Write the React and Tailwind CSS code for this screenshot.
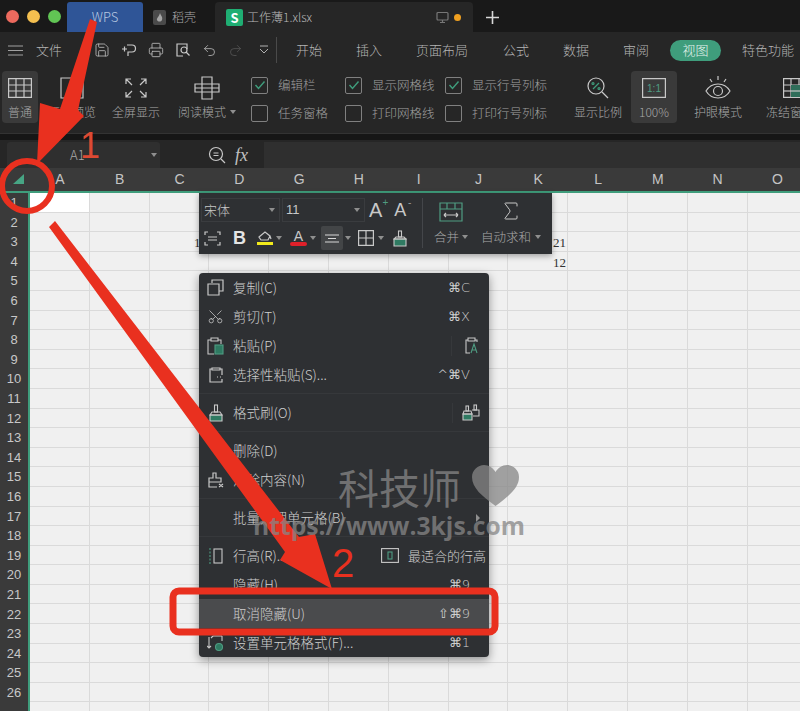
import { Scissors, Printer, Undo2, Redo2, Save, Sigma } from "lucide-react";

const cols = ["A", "B", "C", "D", "G", "H", "I", "J", "K", "L", "M", "N", "O"];
const rows = Array.from({ length: 26 }, (_, i) => i + 1);
const cells = Array.from({ length: 27 * 13 }, (_, i) => i);

const GREEN = "#3f9d7c";

function Caret({ className = "" }) {
  return <span className={"inline-block w-0 h-0 border-x-[3px] border-x-transparent border-t-[4px] border-t-[#8f8f8f] " + className}></span>;
}

function Icon({ w = 18, h = 18, vb = "0 0 18 18", children, className = "" }) {
  return (
    <svg width={w} height={h} viewBox={vb} fill="none" stroke="#c8c8c8" strokeWidth="1.2" className={"shrink-0 " + className}>
      {children}
    </svg>
  );
}

function TopTabs() {
  return (
    <div className="flex h-8 bg-[#191919] items-end">
      <div className="flex items-center gap-[8px] w-[67px] h-8 pl-[6px]">
        <span className="w-[13px] h-[13px] rounded-full bg-[#ed6a5e]"></span>
        <span className="w-[13px] h-[13px] rounded-full bg-[#f4bf4f]"></span>
        <span className="w-[13px] h-[13px] rounded-full bg-[#61c554]"></span>
      </div>
      <div className="w-[76px] h-[30px] bg-[#2f5597] rounded-t-[3px] flex items-center justify-center text-[13px] text-[#b9c9e2]">WPS</div>
      <div className="w-[72px] h-[30px] flex items-center pl-[10px] gap-[6px] text-[12px] text-[#a8a8a8]">
        <svg width="13" height="15" viewBox="0 0 13 15">
          <rect width="13" height="15" rx="2" fill="#4a4a4a" />
          <path d="M7 3c1 3 3 4 2 7-1 2-4 2-5 0-.6-2 2-3 3-7z" fill="#a5a5a5" />
        </svg>
        <span>稻壳</span>
      </div>
      <div className="w-[258px] h-[30px] bg-[#262626] rounded-t-[4px] flex items-center pl-[11px] text-[12px] text-[#b8b8b8]">
        <span className="w-[17px] h-[17px] rounded-[2px] bg-[#1fae73] text-white text-[13px] font-bold flex items-center justify-center leading-none">S</span>
        <span className="ml-[4px] w-[189px]">工作薄1.xlsx</span>
        <Icon w={13} h={13} vb="0 0 13 13" className="opacity-50">
          <rect x="1" y="1.500" width="11" height="7.500" rx="1" />
          <path d="M6.500 9v2.500M4 11.500h5" />
        </Icon>
        <span className="ml-[5px] w-[7px] h-[7px] rounded-full bg-[#f0a020]"></span>
      </div>
      <div className="w-[38px] h-[30px] flex items-center justify-center text-[#d8d8d8]">
        <svg width="13" height="13" viewBox="0 0 13 13" stroke="currentColor" strokeWidth="1.600">
          <path d="M6.500 0v13M0 6.500h13" />
        </svg>
      </div>
    </div>
  );
}

function MenuRow() {
  const tabs = [
    ["开始", "w-[60px]"],
    ["插入", "w-[60px]"],
    ["页面布局", "w-[87px]"],
    ["公式", "w-[60px]"],
    ["数据", "w-[60px]"],
    ["审阅", "w-[47px]"],
  ];
  return (
    <div className="flex h-9 bg-[#262626] items-center text-[13px] text-[#b4b4b4]">
      <svg width="15" height="11" viewBox="0 0 15 11" stroke="#a0a0a0" strokeWidth="1" className="ml-2">
        <path d="M0 1h15M0 5.500h15M0 10h15" />
      </svg>
      <span className="ml-[13px] w-[27px]">文件</span>
      <div className="ml-[31px] flex items-center gap-[11px] text-[#b8b8b8]">
        <Save size={16} strokeWidth={1.3} />
        <Icon w={16} h={16} vb="0 0 16 16">
          <path d="M6 3h5a3 3 0 0 1 0 7H7v4M1 7h5M3.500 4.500v5" />
        </Icon>
        <Printer size={16} strokeWidth={1.3} />
        <Icon w={16} h={16} vb="0 0 16 16">
          <path d="M12 7V2H2v12h6" />
          <circle cx="9" cy="8" r="3" />
          <path d="M11 10l3.500 3.500" />
        </Icon>
        <Undo2 size={15} strokeWidth={1.3} />
        <Redo2 size={15} strokeWidth={1.3} className="text-[#555]" />
      </div>
      <svg width="10" height="10" viewBox="0 0 10 10" stroke="#b0b0b0" fill="none" className="ml-[16px]">
        <path d="M1 1h8M1 4l4 4 4-4" />
      </svg>
      <span className="ml-[7px] h-[26px] w-px bg-[#4a4a4a]"></span>
      <div className="ml-[19px] flex">
        {tabs.map(([label, width]) => (
          <span key={label} className={width}>{label}</span>
        ))}
      </div>
      <span className="w-[51px] h-[21px] rounded-full bg-[#3f9d7c] text-[#e6f3ee] flex items-center justify-center">视图</span>
      <span className="ml-[21px] whitespace-nowrap">特色功能</span>
    </div>
  );
}

function RibbonButton({ label, children, active, width, caret }) {
  return (
    <div className={"shrink-0 flex flex-col items-center rounded-[4px] pt-[3px] h-[52px] " + width + (active ? " bg-[#3a3a3a]" : "")}>
      <div className="h-[28px] flex items-center justify-center">{children}</div>
      <div className="mt-[2px] text-[12px] leading-[16px] text-[#a8a8a8] whitespace-nowrap flex items-center gap-[4px]">
        {label}
        {caret && <Caret />}
      </div>
    </div>
  );
}

function Check({ on, label }) {
  return (
    <div className="flex items-center h-[28px] text-[12.500px] text-[#a0a0a0] whitespace-nowrap">
      <span className="w-[17px] h-[17px] border border-[#808080] rounded-[2px] flex items-center justify-center mr-[10px]">
        {on && (
          <svg width="12" height="12" viewBox="0 0 12 12" fill="none" stroke={GREEN} strokeWidth="1.400">
            <path d="M1.500 6l3 3.500 6-7" />
          </svg>
        )}
      </span>
      {label}
    </div>
  );
}

function Ribbon() {
  return (
    <div className="flex h-[66px] bg-[#262626] pl-[2px] pt-[3px] border-b border-[#333] overflow-hidden">
      <RibbonButton label="普通" active width="w-[36px]">
        <Icon w={24} h={20} vb="0 0 24 20">
          <path d="M.6.6h22.800v18.800H.6zM.6 7h22.800M.6 13h22.800M8 .6v18.800M16 .6v18.800" />
        </Icon>
      </RibbonButton>
      <RibbonButton label="页面预览" width="w-[62px] ml-[3px]">
        <Icon w={24} h={22} vb="0 0 24 22">
          <path d="M1 1h22v20H1z" />
        </Icon>
      </RibbonButton>
      <RibbonButton label="全屏显示" width="w-[50px] ml-[8px]">
        <Icon w={22} h={20} vb="0 0 22 20">
          <path d="M1 6V1h5M1 1l6 6M21 6V1h-5M21 1l-6 6M1 14v5h5M1 19l6-6M21 14v5h-5M21 19l-6-6" />
        </Icon>
      </RibbonButton>
      <RibbonButton label="阅读模式" caret width="w-[62px] ml-[15px]">
        <Icon w={26} h={24} vb="0 0 26 24">
          <path d="M8 1h10v7h7v8h-7v7H8v-7H1V8h7zM8 8h10v8H8zM1 12h24" />
        </Icon>
      </RibbonButton>
      <span className="ml-[9px] w-px h-[60px] bg-[#383838]"></span>
      <div className="ml-[4px] w-[94px] shrink-0">
        <Check on label="编辑栏" />
        <Check label="任务窗格" />
      </div>
      <div className="w-[100px] shrink-0">
        <Check on label="显示网格线" />
        <Check label="打印网格线" />
      </div>
      <div className="w-[117px] shrink-0">
        <Check on label="显示行号列标" />
        <Check label="打印行号列标" />
      </div>
      <span className="w-px h-[60px] bg-[#383838]"></span>
      <RibbonButton label="显示比例" width="w-[50px] ml-[11px]">
        <Icon w={22} h={22} vb="0 0 22 22">
          <circle cx="9" cy="9" r="8" />
          <path d="M15 15l6 6" />
          <path d="M6 12l6-6" stroke={GREEN} />
          <circle cx="6" cy="6.500" r="1" stroke={GREEN} />
          <circle cx="12" cy="11.500" r="1" stroke={GREEN} />
        </Icon>
      </RibbonButton>
      <RibbonButton label="100%" active width="w-[46px] ml-[8px]">
        <svg width="24" height="20" viewBox="0 0 24 20" fill="none" stroke="#c8c8c8" strokeWidth="1.200">
          <path d="M.6.6h22.800v18.800H.6z" />
          <text x="12" y="14" textAnchor="middle" fontSize="10" fill="#4f9c82" stroke="none" fontFamily="Liberation Sans">1:1</text>
        </svg>
      </RibbonButton>
      <span className="ml-[5px] w-px h-[60px] bg-[#383838]"></span>
      <RibbonButton label="护眼模式" width="w-[50px] ml-[11px]">
        <Icon w={26} h={26} vb="0 0 26 26">
          <path d="M1 16c3-5 7-7 12-7s9 2 12 7c-3 5-7 7-12 7s-9-2-12-7z" />
          <circle cx="13" cy="16" r="4.500" />
          <path d="M13 1v4M5 4l2 3M21 4l-2 3" />
        </Icon>
      </RibbonButton>
      <span className="ml-[11px] w-px h-[60px] bg-[#383838]"></span>
      <RibbonButton label="冻结窗格" width="w-[50px] ml-[11px]">
        <Icon w={24} h={20} vb="0 0 24 20" className="ml-[10px]">
          <path d="M.6.6h22.800v18.800H.6zM.6 7h22.800M8 .6v18.800M16 .6v18.800" />
          <path d="M8 7h15v12H8z" fill="#2f6e5a" stroke="none" />
          <path d="M.6 13h22.800" />
        </Icon>
      </RibbonButton>
    </div>
  );
}

function FormulaBar() {
  return (
    <div className="h-[34px] bg-[#262626] border-t-[6px] border-t-[#161616] flex items-end">
      <div className="ml-[7px] w-[153px] h-[26px] bg-[#2f2f2f] rounded-t-[3px] flex items-center text-[13px] text-[#aaa]">
        <span className="ml-[63px]">A1</span>
        <Caret className="ml-auto mr-[3px]" />
      </div>
      <div className="ml-[48px] w-[56px] h-[26px] flex items-center gap-[9px]">
        <Icon w={18} h={18} vb="0 0 18 18">
          <circle cx="8" cy="8" r="6.500" />
          <path d="M13 13l4 4M5.500 7h5M5.500 9.500h5" />
        </Icon>
        <span className="font-['Liberation_Serif',serif] italic text-[18px] text-[#c0c0c0]">fx</span>
      </div>
      <div className="flex-1 h-[26px] bg-[#2f2f2f]"></div>
    </div>
  );
}

function Sheet() {
  return (
    <div className="flex-1 min-h-0 overflow-hidden">
      <div className="flex h-[23px] bg-[#3a3a3a] text-[14px] text-[#c4c4c4] font-['Liberation_Sans',sans-serif]">
        <div className="w-[30px] shrink-0 flex items-center justify-center">
          <span className="w-0 h-0 border-l-[11px] border-l-transparent border-b-[10px] border-b-[#47a584] -mt-[1px] ml-[7px]"></span>
        </div>
        <div className="grid grid-cols-[repeat(13,59.8px)]">
          {cols.map((c) => (
            <div key={c} className="flex items-center justify-center">{c}</div>
          ))}
        </div>
      </div>
      <div className="h-[2px] bg-[#3f9d7c]"></div>
      <div className="flex">
        <div className="w-[28px] shrink-0 bg-[#3a3a3a] text-[13px] text-[#c8c8c8] font-['Liberation_Sans',sans-serif]">
          {rows.map((r) => (
            <div key={r} className="h-[19.6px] flex items-center justify-center">{r}</div>
          ))}
        </div>
        <div className="w-[2px] shrink-0 bg-[#3f9d7c]"></div>
        <div className="grid grid-cols-[repeat(13,59.8px)] auto-rows-[19.6px] bg-[#f0f0f0]">
          {cells.map((i) => (
            <div key={i} className={"border-r border-b border-[#dadada] " + (i === 0 ? "bg-white" : "")}></div>
          ))}
        </div>
      </div>
    </div>
  );
}

function FloatBar() {
  return (
    <div className="absolute left-[199px] top-[193px] w-[353px] h-[61px] bg-[#2e3033] shadow-[0_2px_6px_rgba(0,0,0,0.35)] flex text-[#c8c8c8]">
      <div className="w-[223px] shrink-0">
        <div className="flex items-center h-[31px] pt-[2px] pl-[2px] text-[13px]">
          <div className="w-[79px] h-[24px] border border-[#3a3c3f] flex items-center justify-between pl-[2px] pr-[4px]">
            <span>宋体</span>
            <Caret />
          </div>
          <div className="ml-[2px] w-[83px] h-[24px] border border-[#3a3c3f] flex items-center justify-between pl-[3px] pr-[4px] font-['Liberation_Sans',sans-serif]">
            <span>11</span>
            <Caret />
          </div>
          <span className="ml-[4px] text-[20px] font-['Liberation_Sans',sans-serif] leading-none relative">
            A<span className="absolute -top-[2px] -right-[6px] text-[10px] text-[#4f9c82]">+</span>
          </span>
          <span className="ml-[12px] text-[18px] font-['Liberation_Sans',sans-serif] leading-none relative">
            A<span className="absolute -top-[3px] -right-[5px] text-[10px] text-[#999]">-</span>
          </span>
        </div>
        <div className="flex items-center h-[30px] pl-[5px] -mt-[1px]">
          <Icon w={17} h={15} vb="0 0 17 15">
            <path d="M1 4V1h3M13 1h3v3M1 11v3h3M13 14h3v-3M4 6h9M13 9H4" />
          </Icon>
          <span className="ml-[12px] text-[18px] font-bold font-['Liberation_Sans',sans-serif] text-[#e4e4e4] leading-none">B</span>
          <span className="ml-[11px] flex flex-col items-center w-[16px]">
            <Icon w={14} h={11} vb="0 0 14 11">
              <path d="M1 6l6-5 5 4-2 4H3zM12 5l1 3" />
            </Icon>
            <span className="w-[16px] h-[3px] bg-[#f2ea1c]"></span>
          </span>
          <Caret className="ml-[3px]" />
          <span className="ml-[8px] flex flex-col items-center w-[17px] text-[14px] leading-[12px]">
            <span className="font-['Liberation_Sans',sans-serif]">A</span>
            <span className="w-[17px] h-[4px] rounded-full bg-[#e0202a]"></span>
          </span>
          <Caret className="ml-[3px]" />
          <span className="ml-[5px] w-[22px] h-[24px] bg-[#434547] rounded-[2px] flex items-center justify-center">
            <svg width="14" height="9" viewBox="0 0 14 9" stroke="#d8d8d8" strokeWidth="1.200">
              <path d="M0 1h14M3 4.500h8M0 8h14" />
            </svg>
          </span>
          <Caret className="ml-[2px]" />
          <span className="ml-[7px]">
            <Icon w={16} h={16} vb="0 0 16 16">
              <path d="M.6.6h14.800v14.800H.6zM8 .6v14.800M.6 8h14.800" />
            </Icon>
          </span>
          <Caret className="ml-[4px]" />
          <span className="ml-[9px]">
            <svg width="14" height="17" viewBox="0 0 14 17" fill="none" stroke="#c8c8c8" strokeWidth="1.100">
              <rect x="5.500" y="1" width="3" height="6" />
              <path d="M1 9h12v7H1z" fill="#2f7a62" />
              <path d="M3 7h8l2 2H1z" />
            </svg>
          </span>
        </div>
      </div>
      <div className="w-px h-[50px] mt-[5px] bg-[#44464a]"></div>
      <div className="ml-[6px] w-[44px] flex flex-col items-center pt-[9px] text-[12.500px] text-[#a8a8a8]">
        <svg width="24" height="20" viewBox="0 0 24 20" fill="none" stroke="#4f9c82" strokeWidth="1.200">
          <path d="M1 1h22v18H1zM1 7h22M8 1v6M16 1v6" />
          <path d="M5 13h14M5 13l2-2M5 13l2 2M19 13l-2-2M19 13l-2 2" stroke="#c8c8c8" />
        </svg>
        <span className="mt-[6px] flex items-center gap-[3px] whitespace-nowrap">合并<Caret /></span>
      </div>
      <div className="ml-[7px] w-[62px] flex flex-col items-center pt-[6px] text-[12.500px] text-[#a8a8a8]">
        <Sigma size={24} strokeWidth={1} className="text-[#c8c8c8]" />
        <span className="mt-[5px] flex items-center gap-[4px] whitespace-nowrap">自动求和<Caret /></span>
      </div>
    </div>
  );
}

function MenuItem({ icon, label, right, active, extra }) {
  return (
    <div className={"h-[29px] flex items-center pl-[8px] pr-[19px] text-[13.500px] text-[#cfcfcf] " + (active ? "bg-[#4a4b4d]" : "")}>
      <span className="w-[17px] h-[18px] flex items-center justify-center shrink-0">{icon}</span>
      <span className="ml-[9px] whitespace-nowrap">{label}</span>
      {right && <span className="ml-auto whitespace-nowrap font-['DejaVu_Sans',sans-serif] text-[13px]">{right}</span>}
      {extra}
    </div>
  );
}

function Divider() {
  return <div className="h-[9px] flex items-center"><div className="h-px w-full bg-[#36383b]"></div></div>;
}

function ContextMenu() {
  const fmtBrush = (
    <svg width="14" height="18" viewBox="0 0 14 18" fill="none" stroke="#c8c8c8" strokeWidth="1.100">
      <rect x="5.500" y="1" width="3" height="7" />
      <path d="M1 11h12v6H1z" fill="#2f7a62" />
      <path d="M3 8h8l2 3H1z" />
    </svg>
  );
  return (
    <div className="absolute left-[199px] top-[273px] w-[290px] h-[384px] bg-[#2e3033] rounded-[4px] shadow-[0_3px_10px_rgba(0,0,0,0.4)]">
      <MenuItem
        label="复制(C)"
        right="⌘C"
        icon={
          <Icon w={17} h={17} vb="0 0 17 17">
            <path d="M5 4V1h11v11h-4M1 5h11v11H1z" />
          </Icon>
        }
      />
      <MenuItem label="剪切(T)" right="⌘X" icon={<Scissors size={17} strokeWidth={1.100} className="-rotate-90 text-[#c8c8c8]" />} />
      <MenuItem
        label="粘贴(P)"
        icon={
          <svg width="17" height="18" viewBox="0 0 17 18" fill="none" stroke="#c8c8c8" strokeWidth="1.100">
            <path d="M4 3H1v14h6M11 3h3v4M4 1h7v3H4z" />
            <rect x="8" y="8" width="8" height="9" fill="#2f7a62" stroke="#4f9c82" />
          </svg>
        }
        extra={
          <span className="ml-auto -mr-[9px] flex items-center">
            <span className="w-px h-[20px] bg-[#36383b] mr-[13px]"></span>
            <svg width="14" height="17" viewBox="0 0 14 17" fill="none" stroke="#c8c8c8" strokeWidth="1.100">
              <path d="M3 3H1v13h4M10 3h2v2M3 1h7v3H3z" />
              <path d="M6 16l3-9 3 9M7 13h4" stroke="#4f9c82" />
            </svg>
          </span>
        }
      />
      <MenuItem
        label="选择性粘贴(S)..."
        right="^⌘V"
        icon={
          <Icon w={14} h={16} vb="0 0 14 16">
            <path d="M3 2H1v13h12v-3M11 2h2v6M3 1h8v2H3zM8 10h1M11 10h1" />
          </Icon>
        }
      />
      <Divider />
      <MenuItem
        label="格式刷(O)"
        icon={fmtBrush}
        extra={
          <span className="ml-auto -mr-[10px] flex items-center">
            <span className="w-px h-[20px] bg-[#36383b] mr-[9px]"></span>
            <svg width="18" height="17" viewBox="0 0 18 17" fill="none" stroke="#c8c8c8" strokeWidth="1.100">
              <rect x="4" y="2" width="2.500" height="5" />
              <rect x="12" y="1" width="2.500" height="5" />
              <path d="M1 10h9v6H1z" fill="#2f7a62" />
              <path d="M2 7h7l1 3H1zM10 6h7v6h-6" />
            </svg>
          </span>
        }
      />
      <Divider />
      <MenuItem label="删除(D)" />
      <MenuItem
        label="清除内容(N)"
        icon={
          <Icon w={16} h={16} vb="0 0 16 16">
            <path d="M5 1h3v5h5v4H1V6h4zM1 10v5h8M11 12l4 3M15 12l-4 3" />
          </Icon>
        }
      />
      <Divider />
      <MenuItem label="批量处理单元格(B)" extra={<span className="ml-auto -mr-[10px] w-0 h-0 border-y-[4px] border-y-transparent border-l-[4px] border-l-[#8f8f8f]"></span>} />
      <Divider />
      <MenuItem
        label="行高(R)..."
        icon={
          <svg width="15" height="18" viewBox="0 0 15 18" fill="none" stroke="#c8c8c8" strokeWidth="1.100">
            <rect x="6" y="2" width="8" height="14" />
            <path d="M2 1v16" stroke="#4f9c82" strokeDasharray="2 1.500" />
          </svg>
        }
        extra={
          <span className="ml-auto -mr-[16px] flex items-center text-[13px]">
            <svg width="18" height="15" viewBox="0 0 18 15" fill="none" stroke="#c8c8c8" strokeWidth="1.100">
              <rect x=".6" y=".6" width="16.800" height="13.800" />
              <rect x="7" y="4" width="4" height="7" stroke="#4f9c82" />
            </svg>
            <span className="ml-[9px] whitespace-nowrap">最适合的行高</span>
          </span>
        }
      />
      <MenuItem label="隐藏(H)" right="⌘9" />
      <MenuItem label="取消隐藏(U)" right="⇧⌘9" active />
      <MenuItem
        label="设置单元格格式(F)..."
        right="⌘1"
        icon={
          <svg width="17" height="18" viewBox="0 0 17 18" fill="none" stroke="#c8c8c8" strokeWidth="1.100">
            <path d="M2 3v11M0 12l2 2 2-2M6 2h9M15 2v5M6 2l-2 2" />
            <circle cx="12" cy="13" r="3.500" stroke="#4f9c82" fill="#2f7a62" />
          </svg>
        }
      />
    </div>
  );
}

function Watermark() {
  return (
    <div className="absolute left-[253px] top-[458px] pointer-events-none text-[#868686]/75 font-normal">
      <div className="flex items-center gap-[11px] pl-[85px] h-[56px]">
        <span className="text-[41px] leading-none whitespace-nowrap">科技师</span>
        <svg width="47" height="42" viewBox="0 0 47 42" className="opacity-75">
          <path d="M23.500 41C10 31 0 23 0 12 0 5 6 0 12 0c5 0 9 3 11.500 7C26 3 30 0 35 0c6 0 12 5 12 12 0 11-10 19-23.500 29z" fill="#868686" />
        </svg>
      </div>
      <div className="-mt-[3px] text-[24.700px] leading-[30px] font-bold font-['Open_Sans',sans-serif] whitespace-nowrap">https://www.3kjs.com</div>
    </div>
  );
}

function Annotations() {
  return (
    <svg className="absolute left-0 top-0 pointer-events-none" width="800" height="711" viewBox="0 0 800 711" fill="none">
      <polygon points="90,19 97,22 78,110 84,116 37,164 40,103 60,109" fill="#e9301f" />
      <circle cx="27" cy="186" r="25" stroke="#e9301f" strokeWidth="6" />
      <polygon points="55,221 299,537 315,534 332,589 280,560 285,552 49,227" fill="#e9301f" />
      <rect x="173" y="591" width="322" height="41" rx="6" stroke="#e9301f" strokeWidth="7" />
      <text x="80" y="158" fontFamily="Liberation Sans" fontSize="36" fill="#dd4a33">1</text>
      <text x="332" y="577" fontFamily="Liberation Sans" fontSize="40" fill="#e9301f">2</text>
    </svg>
  );
}

export default function App() {
  return (
    <div className="relative w-[800px] h-[711px] overflow-hidden flex flex-col bg-[#262626] font-['Noto_Sans_CJK_SC','Noto_Sans',sans-serif] font-light">
      <TopTabs />
      <MenuRow />
      <Ribbon />
      <FormulaBar />
      <Sheet />
      <span className="absolute left-[194px] top-[233px] text-[13px] text-[#333] font-['Liberation_Serif',serif]">1</span>
      <span className="absolute left-[553px] top-[233px] text-[13px] text-[#333] font-['Liberation_Serif',serif]">21</span>
      <span className="absolute left-[553px] top-[253px] text-[13px] text-[#333] font-['Liberation_Serif',serif]">12</span>
      <FloatBar />
      <ContextMenu />
      <Annotations />
      <Watermark />
    </div>
  );
}
